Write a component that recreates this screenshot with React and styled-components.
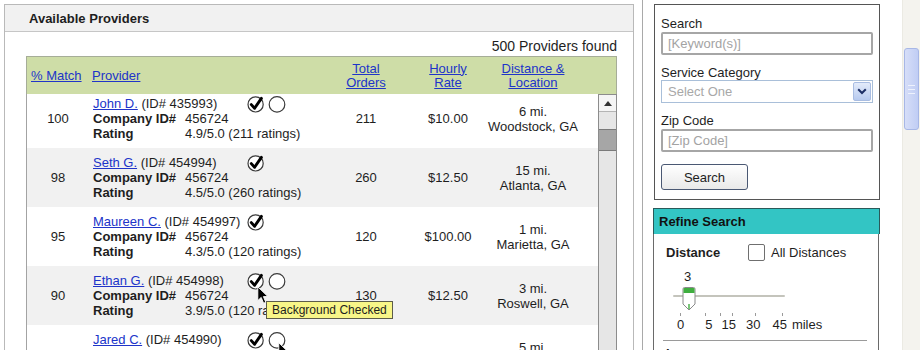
import React from 'react'
import styled, { createGlobalStyle } from 'styled-components'

const GlobalStyle = createGlobalStyle`
  html, body {
    margin: 0;
    padding: 0;
    background: #fff;
  }
  body {
    font-family: 'Liberation Sans', Arial, sans-serif;
    font-size: 13px;
    color: #1e1e1e;
  }
`

const COLS = '62px 242px 70px 94px 76px 1fr'

const providers = [
  {
    match: 100,
    name: 'John D.',
    id: '435993',
    rating: '4.9/5.0 (211 ratings)',
    orders: 211,
    rate: '$10.00',
    miles: '6 mi.',
    city: 'Woodstock, GA',
    badges: ['check', 'circle']
  },
  {
    match: 98,
    name: 'Seth G.',
    id: '454994',
    rating: '4.5/5.0 (260 ratings)',
    orders: 260,
    rate: '$12.50',
    miles: '15 mi.',
    city: 'Atlanta, GA',
    badges: ['check'],
    shaded: true
  },
  {
    match: 95,
    name: 'Maureen C.',
    id: '454997',
    rating: '4.3/5.0 (120 ratings)',
    orders: 120,
    rate: '$100.00',
    miles: '1 mi.',
    city: 'Marietta, GA',
    badges: ['check']
  },
  {
    match: 90,
    name: 'Ethan G.',
    id: '454998',
    rating: '3.9/5.0 (120 ratings)',
    orders: 130,
    rate: '$12.50',
    miles: '3 mi.',
    city: 'Roswell, GA',
    badges: ['check', 'circle'],
    cursor: 'check',
    tooltip: 'Background Checked',
    shaded: true
  },
  {
    match: 95,
    name: 'Jared C.',
    id: '454990',
    rating: '4.1/5.0 (98 ratings)',
    orders: 100,
    rate: '$12.50',
    miles: '5 mi.',
    city: 'Alpharetta, GA',
    badges: ['check', 'circle'],
    cursor: 'circle'
  }
]

const Page = styled.div`
  display: flex;
  width: 922px;
  height: 350px;
  overflow: hidden;
`

/* ---------- results panel ---------- */

const ResultsPanel = styled.section`
  margin: 4px 0 0 4px;
  width: 630px;
  box-sizing: border-box;
  border: 1px solid #b9b9b9;
  border-bottom: none;
  display: flex;
  flex-direction: column;
  flex-shrink: 0;
`

const PanelHeader = styled.div`
  height: 26px;
  background: #f1f1f1;
  border-bottom: 1px solid #c6c6c6;
  padding-left: 24px;
  display: flex;
  align-items: center;
  font-weight: bold;
`

const PanelBody = styled.div`
  flex: 1;
  min-height: 0;
  padding: 7px 16px 0 21px;
  display: flex;
  flex-direction: column;
`

const FoundCount = styled.div`
  text-align: right;
  font-size: 14px;
  line-height: 15px;
  margin-bottom: 2px;
`

const Table = styled.div`
  flex: 1;
  min-height: 0;
  display: flex;
  flex-direction: column;
`

const TableHead = styled.div`
  display: grid;
  grid-template-columns: ${COLS};
  height: 38px;
  flex-shrink: 0;
  box-sizing: border-box;
  background: #cedda7;
  border: 1px solid #a6ad98;
  border-bottom: none;
`

const HeadCell = styled.div`
  display: flex;
  align-items: center;
  justify-content: ${({ $align }) => ($align === 'left' ? 'flex-start' : 'center')};
  padding-left: ${({ $pad }) => $pad || 0}px;
  text-align: center;
  line-height: 14px;
`

const Link = styled.a`
  color: #2034c9;
  text-decoration: underline;
  cursor: pointer;
`

const TableBody = styled.div`
  flex: 1;
  min-height: 0;
  display: flex;
  border-left: 1px solid #a3a3a3;
`

const RowViewport = styled.div`
  flex: 1;
  overflow: hidden;
`

const RowList = styled.div`
  margin-top: -5px;
`

const Row = styled.div`
  display: grid;
  grid-template-columns: ${COLS};
  height: 59px;
  background: ${({ $shaded }) => ($shaded ? '#f1f1f1' : '#fff')};
`

const Cell = styled.div`
  display: flex;
  flex-direction: column;
  justify-content: center;
  align-items: center;
  line-height: 15px;
  white-space: nowrap;
  text-align: center;
`

const ProviderCell = styled.div`
  display: flex;
  flex-direction: column;
  justify-content: center;
  padding-left: 4px;
  line-height: 15px;
  white-space: nowrap;
`

const NameLine = styled.div`
  display: grid;
  grid-template-columns: 154px auto;
  align-items: center;
`

const InfoLine = styled.div`
  display: grid;
  grid-template-columns: 92px auto;
`

const InfoLabel = styled.span`
  font-weight: bold;
`

const Badges = styled.div`
  position: relative;
  display: flex;
  gap: 3px;
  height: 15px;
  align-items: center;
`

const BadgeSlot = styled.span`
  position: relative;
  display: block;
  width: 18px;
  height: 18px;
`

const Pointer = styled.svg`
  position: absolute;
  left: 10px;
  top: ${({ $top }) => $top}px;
  z-index: 3;
`

const Tooltip = styled.div`
  position: absolute;
  left: 19px;
  top: 28px;
  z-index: 2;
  background: #f8f688;
  border: 1px solid #5c5c4a;
  font-size: 12px;
  line-height: 16px;
  padding: 0 5px;
  white-space: nowrap;
`

const Scrollbar = styled.div`
  width: 19px;
  box-sizing: border-box;
  border: 1px solid #8c8c8c;
  border-bottom: none;
  background: #e6e6e6;
  display: flex;
  flex-direction: column;
`

const ScrollButton = styled.div`
  height: 16px;
  background: #f5f5f5;
  border-bottom: 1px solid #b4b4b4;
  display: flex;
  align-items: center;
  justify-content: center;

  &::before {
    content: '';
    border-left: 4px solid transparent;
    border-right: 4px solid transparent;
    border-bottom: 5px solid #333;
  }
`

const ScrollThumb = styled.div`
  margin-top: 17px;
  height: 20px;
  background: #a6a6a6;
  border: 1px solid #7a7a7a;
  border-left: none;
  border-right: none;
`

/* ---------- right column ---------- */

const ColumnRule = styled.div`
  margin-left: 8px;
  width: 1px;
  background: #a9a9a9;
  flex-shrink: 0;
`

const SideColumn = styled.aside`
  margin-left: 10px;
  width: 227px;
  padding-top: 4px;
  display: flex;
  flex-direction: column;
  flex-shrink: 0;
`

const SearchBox = styled.div`
  margin-left: 1px;
  height: 196px;
  flex-shrink: 0;
  box-sizing: border-box;
  border: 1px solid #555;
  padding: 12px 0 0 6px;
  display: flex;
  flex-direction: column;
`

const FieldLabel = styled.div`
  line-height: 14px;
  margin-top: ${({ $first }) => ($first ? 0 : 11)}px;
`

const TextInput = styled.div`
  margin-top: 1px;
  width: 212px;
  height: 23px;
  box-sizing: border-box;
  border: 2px solid #a6a6a6;
  border-radius: 2px;
  color: #a3a3a3;
  padding-left: 5px;
  display: flex;
  align-items: center;
`

const SelectBox = styled.div`
  width: 212px;
  height: 23px;
  box-sizing: border-box;
  border: 1px solid #a9bfd9;
  display: flex;
  align-items: stretch;
  color: #a8a8a8;
`

const SelectValue = styled.div`
  flex: 1;
  padding-left: 6px;
  display: flex;
  align-items: center;
`

const SelectButton = styled.div`
  width: 16px;
  margin: 1px;
  border-radius: 2px;
  background: linear-gradient(#e3ebfa, #b7caef);
  border: 1px solid #a9bde2;
  display: flex;
  align-items: center;
  justify-content: center;
`

const SearchButton = styled.button`
  margin-top: 12px;
  width: 87px;
  height: 26px;
  border: 1px solid #4a5873;
  border-radius: 3px;
  background: linear-gradient(#ffffff, #e9e9e9);
  font-family: inherit;
  font-size: 13px;
  color: #1e1e1e;
  padding: 0;
`

const RefineBox = styled.div`
  margin-top: 8px;
  flex: 1;
  min-height: 0;
  display: flex;
  flex-direction: column;
`

const RefineHeader = styled.div`
  height: 26px;
  flex-shrink: 0;
  box-sizing: border-box;
  background: #33c5c4;
  border: 1px solid #2a5a5a;
  border-bottom: none;
  padding-left: 5px;
  display: flex;
  align-items: center;
  font-weight: bold;
  color: #111;
`

const RefineBody = styled.div`
  flex: 1;
  width: 226px;
  box-sizing: border-box;
  border-left: 1px solid #6a6a6a;
  border-right: 1px solid #6a6a6a;
  padding: 10px 0 0 12px;
`

const DistanceRow = styled.div`
  display: flex;
  align-items: center;
  height: 17px;
`

const DistanceLabel = styled.span`
  font-weight: bold;
  width: 82px;
`

const Checkbox = styled.span`
  width: 17px;
  height: 17px;
  box-sizing: border-box;
  border: 1px solid #6f6f6f;
  border-radius: 2px;
  margin-right: 6px;
`

const SliderValue = styled.div`
  margin: 9px 0 0 18px;
  line-height: 14px;
`

const SliderTrack = styled.div`
  position: relative;
  margin: 3px 0 0 7px;
  width: 112px;
  height: 24px;

  &::before {
    content: '';
    position: absolute;
    left: 0;
    right: 0;
    top: 8px;
    height: 2px;
    background: #c4c4bc;
    border-radius: 1px;
  }
`

const SliderThumb = styled.svg`
  position: absolute;
  left: 9px;
  top: 0;
`

const Ticks = styled.div`
  display: flex;
  height: 5px;
  align-items: flex-end;
`

const Tick = styled.span`
  width: 1px;
  height: 3px;
  background: #9a9a9a;
  margin-left: ${({ $gap }) => $gap}px;
`

const Scale = styled.div`
  display: flex;
  line-height: 14px;
  margin-top: 2px;
`

const ScaleLabel = styled.span`
  margin-left: ${({ $gap }) => $gap}px;
`

const Rule = styled.div`
  margin: 8px 0 0 -3px;
  width: 204px;
  height: 1px;
  background: #9a9a9a;
`

const SubLabel = styled.div`
  margin-top: 6px;
  font-weight: bold;
  line-height: 14px;
`

const PageScroll = styled.div`
  margin-left: 22px;
  width: 18px;
  background: #f4f3ee;
  border-left: 1px solid #ebeae3;
  flex-shrink: 0;
  padding-top: 48px;
  box-sizing: border-box;
`

const PageThumb = styled.div`
  margin-left: 1px;
  width: 15px;
  height: 82px;
  box-sizing: border-box;
  border: 1px solid #a7b7e6;
  border-radius: 3px;
  background: linear-gradient(90deg, #d6def8, #c0cdf4);
  display: flex;
  align-items: center;
  justify-content: center;

  &::before {
    content: '';
    width: 7px;
    height: 7px;
    border-top: 1px solid #eef2fd;
    border-bottom: 1px solid #eef2fd;
    background: linear-gradient(#eef2fd, #eef2fd) center / 100% 1px no-repeat;
  }
`

/* ---------- icons ---------- */

const CheckBadge = () => (
  <svg width="18" height="18" viewBox="0 0 18 18">
    <circle cx="8.6" cy="9.4" r="7.6" fill="#fff" stroke="#3a3a3a" strokeWidth="1.2" />
    <path
      d="M4.3 9.6 L7.6 13.3 L14.4 3.4"
      fill="none"
      stroke="#000"
      strokeWidth="2.9"
      strokeLinecap="round"
      strokeLinejoin="round"
    />
  </svg>
)

const EmptyBadge = () => (
  <svg width="18" height="18" viewBox="0 0 18 18">
    <circle cx="9" cy="9.4" r="7.8" fill="#fff" stroke="#3a3a3a" strokeWidth="1.2" />
  </svg>
)

const Arrow = ({ top }) => (
  <Pointer $top={top} width="12" height="19" viewBox="0 0 12 19">
    <path
      d="M0.8 0.8 L0.8 14.6 L4.2 11.4 L6.6 17.2 L8.8 16.3 L6.4 10.6 L10.9 10.6 Z"
      fill="#000"
      stroke="#fff"
      strokeWidth="0.9"
      strokeLinejoin="round"
    />
  </Pointer>
)

const Chevron = () => (
  <svg width="10" height="7" viewBox="0 0 10 7">
    <path d="M1.2 1.2 L5 5 L8.8 1.2" fill="none" stroke="#1d2f66" strokeWidth="2" />
  </svg>
)

/* ---------- parts ---------- */

const ProviderRow = ({ p }) => (
  <Row $shaded={p.shaded}>
    <Cell>{p.match}</Cell>
    <ProviderCell>
      <NameLine>
        <span>
          <Link>{p.name}</Link> (ID# {p.id})
        </span>
        <Badges>
          {p.badges.map((b) => (
            <BadgeSlot key={b}>
              {b === 'check' ? <CheckBadge /> : <EmptyBadge />}
              {p.cursor === b && <Arrow top={b === 'check' ? 14 : 11} />}
            </BadgeSlot>
          ))}
          {p.tooltip && <Tooltip>{p.tooltip}</Tooltip>}
        </Badges>
      </NameLine>
      <InfoLine>
        <InfoLabel>Company ID#</InfoLabel>
        <span>456724</span>
      </InfoLine>
      <InfoLine>
        <InfoLabel>Rating</InfoLabel>
        <span>{p.rating}</span>
      </InfoLine>
    </ProviderCell>
    <Cell>{p.orders}</Cell>
    <Cell>{p.rate}</Cell>
    <Cell>
      <span>{p.miles}</span>
      <span>{p.city}</span>
    </Cell>
  </Row>
)

const Results = () => (
  <ResultsPanel>
    <PanelHeader>Available Providers</PanelHeader>
    <PanelBody>
      <FoundCount>500 Providers found</FoundCount>
      <Table>
        <TableHead>
          <HeadCell $align="left" $pad={4}>
            <Link>% Match</Link>
          </HeadCell>
          <HeadCell $align="left" $pad={3}>
            <Link>Provider</Link>
          </HeadCell>
          <HeadCell>
            <Link>
              Total
              <br />
              Orders
            </Link>
          </HeadCell>
          <HeadCell>
            <Link>
              Hourly
              <br />
              Rate
            </Link>
          </HeadCell>
          <HeadCell>
            <Link>
              Distance &amp;
              <br />
              Location
            </Link>
          </HeadCell>
        </TableHead>
        <TableBody>
          <RowViewport>
            <RowList>
              {providers.map((p) => (
                <ProviderRow key={p.id} p={p} />
              ))}
            </RowList>
          </RowViewport>
          <Scrollbar>
            <ScrollButton />
            <ScrollThumb />
          </Scrollbar>
        </TableBody>
      </Table>
    </PanelBody>
  </ResultsPanel>
)

const Sidebar = () => (
  <SideColumn>
    <SearchBox>
      <FieldLabel $first>Search</FieldLabel>
      <TextInput>[Keyword(s)]</TextInput>
      <FieldLabel>Service Category</FieldLabel>
      <SelectBox>
        <SelectValue>Select One</SelectValue>
        <SelectButton>
          <Chevron />
        </SelectButton>
      </SelectBox>
      <FieldLabel>Zip Code</FieldLabel>
      <TextInput>[Zip Code]</TextInput>
      <SearchButton>Search</SearchButton>
    </SearchBox>

    <RefineBox>
      <RefineHeader>Refine Search</RefineHeader>
      <RefineBody>
        <DistanceRow>
          <DistanceLabel>Distance</DistanceLabel>
          <Checkbox />
          <span>All Distances</span>
        </DistanceRow>
        <SliderValue>3</SliderValue>
        <SliderTrack>
          <SliderThumb width="14" height="24" viewBox="0 0 14 24">
            <path d="M1 2 Q1 0.5 2.5 0.5 L11.5 0.5 Q13 0.5 13 2 L13 17 L7 23 L1 17 Z" fill="#fff" stroke="#8a8a8a" />
            <path d="M1.5 2 Q1.5 1 2.5 1 L11.5 1 Q12.5 1 12.5 2 L12.5 6 L1.5 6 Z" fill="#3fae3f" />
            <path d="M7 17 L7 22" stroke="#3fae3f" strokeWidth="1.4" />
          </SliderThumb>
        </SliderTrack>
        <Ticks>
          {[14, 24, 14, 11, 22, 26].map((g, i) => (
            <Tick key={i} $gap={g} />
          ))}
        </Ticks>
        <Scale>
          <ScaleLabel $gap={11}>0</ScaleLabel>
          <ScaleLabel $gap={21}>5</ScaleLabel>
          <ScaleLabel $gap={9}>15</ScaleLabel>
          <ScaleLabel $gap={10}>30</ScaleLabel>
          <ScaleLabel $gap={12}>45</ScaleLabel>
          <ScaleLabel $gap={5}>miles</ScaleLabel>
        </Scale>
        <Rule />
        <SubLabel>Insurance</SubLabel>
      </RefineBody>
    </RefineBox>
  </SideColumn>
)

export default function App() {
  return (
    <>
      <GlobalStyle />
      <Page>
        <Results />
        <ColumnRule />
        <Sidebar />
        <PageScroll>
          <PageThumb />
        </PageScroll>
      </Page>
    </>
  )
}
